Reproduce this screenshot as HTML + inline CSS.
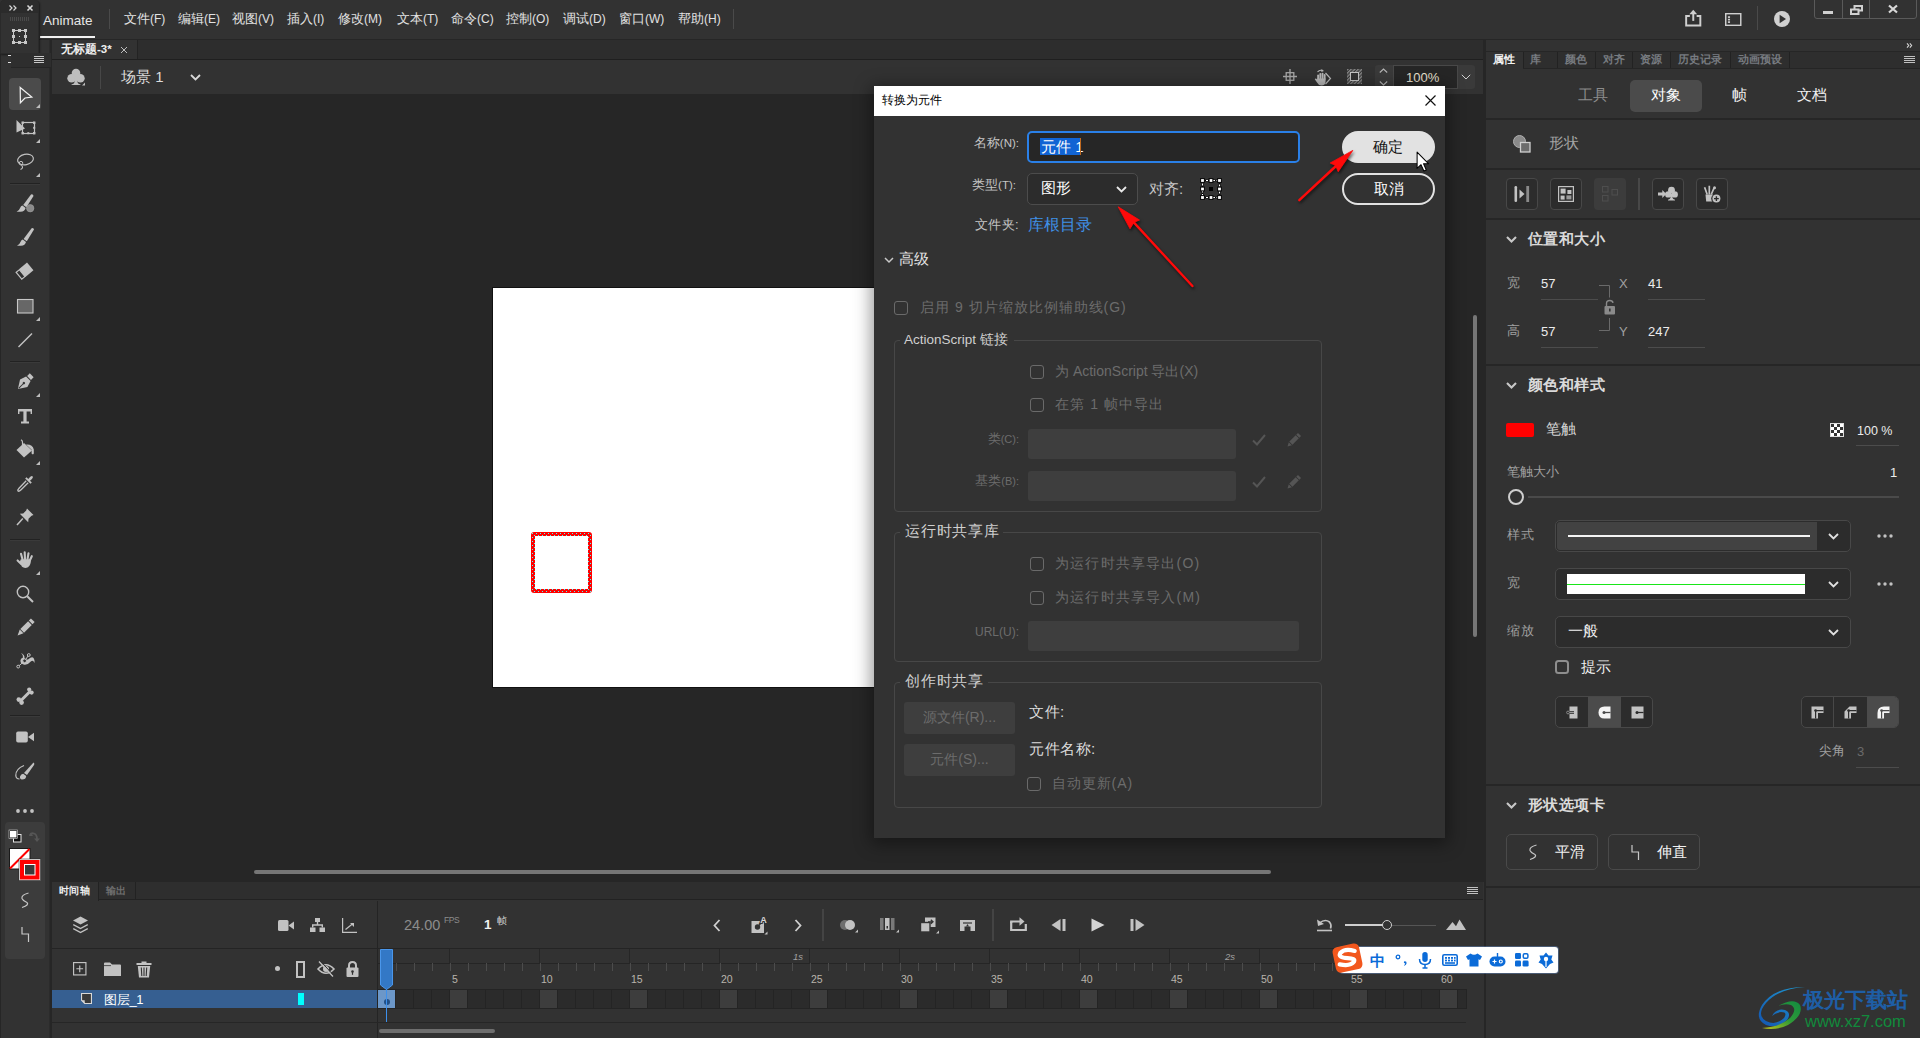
<!DOCTYPE html>
<html lang="zh">
<head>
<meta charset="utf-8">
<title>Animate</title>
<style>
*{box-sizing:border-box;margin:0;padding:0}
html,body{width:1920px;height:1038px;overflow:hidden;background:#262626}
body{font-family:"Liberation Sans",sans-serif;font-size:13px;color:#d6d6d6;position:relative}
.abs{position:absolute}
.t{position:absolute;white-space:nowrap;line-height:1}
svg{position:absolute;overflow:visible}
/* top menubar */
#menubar{left:0;top:0;width:1920px;height:40px;background:#323232}
#menubar .mi{top:12px;font-size:13px;color:#e2e2e2}
/* doc tabs */
#doctabs{left:52px;top:40px;width:1431px;height:20px;background:#2d2d2d;border-bottom:1px solid #1f1f1f}
#scenebar{left:52px;top:60px;width:1431px;height:34px;background:#323232}
/* toolbar */
#toolbar{left:0;top:40px;width:50px;height:998px;background:#323232}
/* stage */
#stagearea{left:50px;top:94px;width:1436px;height:788px;background:#262626}
/* right */
#right{left:1487px;top:40px;width:433px;height:998px;background:#323232}
/* timeline */
#timeline{left:52px;top:882px;width:1432px;height:156px;background:#323232}
</style>
</head>
<body>
<!--MENUBAR-->
<div id="menubar" class="abs">
<div class="abs" style="left:0;top:39px;width:1920px;height:1px;background:#262626"></div>
<div class="t" style="left:43px;top:14px;font-size:13.5px;color:#e6e6e6">Animate</div>
<div class="abs" style="left:40px;top:36px;width:55px;height:1.5px;background:#f0f0f0"></div>
<div class="abs" style="left:109px;top:9px;width:1px;height:20px;background:#4a4a4a"></div>
<div class="t mi" style="left:124px">文件<span style="font-size:12px">(F)</span></div>
<div class="t mi" style="left:178px">编辑<span style="font-size:12px">(E)</span></div>
<div class="t mi" style="left:232px">视图<span style="font-size:12px">(V)</span></div>
<div class="t mi" style="left:287px">插入<span style="font-size:12px">(I)</span></div>
<div class="t mi" style="left:338px">修改<span style="font-size:12px">(M)</span></div>
<div class="t mi" style="left:397px">文本<span style="font-size:12px">(T)</span></div>
<div class="t mi" style="left:451px">命令<span style="font-size:12px">(C)</span></div>
<div class="t mi" style="left:506px">控制<span style="font-size:12px">(O)</span></div>
<div class="t mi" style="left:563px">调试<span style="font-size:12px">(D)</span></div>
<div class="t mi" style="left:619px">窗口<span style="font-size:12px">(W)</span></div>
<div class="t mi" style="left:678px">帮助<span style="font-size:12px">(H)</span></div>
<div class="abs" style="left:733px;top:9px;width:1px;height:20px;background:#4a4a4a"></div>
<!-- share -->
<svg style="left:1685px;top:8px" width="16.500" height="19" viewBox="0 0 17 19"><path d="M5 8H1.2V17.8H15.8V8H12" fill="none" stroke="#cfcfcf" stroke-width="2"/><path d="M8.5 13V3" stroke="#cfcfcf" stroke-width="2"/><path d="M4.5 6.2L8.5 1.6L12.5 6.2Z" fill="#cfcfcf"/></svg>
<!-- workspace -->
<svg style="left:1725px;top:13px" width="16.500" height="13" viewBox="0 0 17 14" preserveAspectRatio="none"><rect x="0.75" y="0.75" width="15.5" height="12.5" fill="none" stroke="#cfcfcf" stroke-width="1.5"/><rect x="3" y="3.5" width="2.2" height="1.8" fill="#cfcfcf"/><rect x="3" y="6.2" width="2.2" height="1.8" fill="#cfcfcf"/><rect x="3" y="8.9" width="2.2" height="1.8" fill="#cfcfcf"/></svg>
<div class="abs" style="left:1757px;top:6px;width:1px;height:24px;background:#4a4a4a"></div>
<!-- play -->
<svg style="left:1774px;top:11px" width="16" height="16" viewBox="0 0 16 16"><circle cx="8" cy="8" r="8" fill="#d0d0d0"/><path d="M5.6 3.8L12 8L5.6 12.2Z" fill="#323232"/></svg>
<!-- window controls -->
<div class="abs" style="left:1814px;top:-3px;width:103px;height:22px;border:1px solid #5a5a5a;border-radius:3px"></div>
<div class="abs" style="left:1842px;top:0;width:1px;height:19px;background:#5a5a5a"></div>
<div class="abs" style="left:1869px;top:0;width:1px;height:19px;background:#5a5a5a"></div>
<div class="abs" style="left:1823px;top:11px;width:10px;height:3px;background:#d0d0d0"></div>
<svg style="left:1850px;top:5px" width="13" height="10" viewBox="0 0 13 10"><rect x="4.5" y="1" width="7.5" height="4.5" fill="none" stroke="#d0d0d0" stroke-width="2"/><rect x="1" y="4.5" width="7.5" height="4.5" fill="#323232" stroke="#d0d0d0" stroke-width="2"/></svg>
<svg style="left:1888px;top:5px" width="10" height="8" viewBox="0 0 10 8"><path d="M1 0.5L9 7.5M9 0.5L1 7.5" stroke="#d8d8d8" stroke-width="2.2"/></svg>
</div>
<!--TOOLBAR-->
<div id="toolbar" class="abs">
<div class="abs" style="left:0;top:0;width:1px;height:998px;background:#262626"></div>
<div class="abs" style="left:49px;top:0;width:1px;height:998px;background:#2b2b2b"></div>
<div class="abs" style="left:0;top:-40px;width:39px;height:54px;background:#323232;border:1px solid #2a2a2a;border-radius:4px 4px 0 0;box-shadow:1px 1px 2px rgba(0,0,0,.45)"></div>
<div class="abs" style="left:1px;top:-40px;width:37px;height:13px;background:#2b2b2b;border-radius:4px 4px 0 0"></div>
<svg style="left:8.500px;top:-35px" width="8" height="6" viewBox="0 0 8 6"><path d="M0.5 0.5L3 3L0.5 5.5M4.5 0.5L7 3L4.5 5.5" fill="none" stroke="#d8d8d8" stroke-width="1.2"/></svg>
<svg style="left:27px;top:-35px" width="6" height="6" viewBox="0 0 6 6"><path d="M0.5 0.5L5.5 5.5M5.5 0.5L0.5 5.5" stroke="#d8d8d8" stroke-width="1.6"/></svg>
<div class="abs" style="left:10px;top:-23px;width:19px;height:4px;background:repeating-linear-gradient(90deg,#4a4a4a 0 1px,transparent 1px 2px)"></div>
<svg style="left:12px;top:-11px" width="15" height="15" viewBox="0 0 15 15"><rect x="1.5" y="1.5" width="12" height="12" fill="none" stroke="#c8c8c8" stroke-width="1"/><g fill="#c8c8c8"><rect x="0" y="0" width="3" height="3"/><rect x="6" y="0" width="3" height="3"/><rect x="12" y="0" width="3" height="3"/><rect x="0" y="6" width="3" height="3"/><rect x="12" y="6" width="3" height="3"/><rect x="0" y="12" width="3" height="3"/><rect x="6" y="12" width="3" height="3"/><rect x="12" y="12" width="3" height="3"/><rect x="7" y="7" width="1" height="1"/></g></svg>
<div class="abs" style="left:11px;top:13px;width:40px;height:15px;background:#2e2e2e;border-bottom:1px solid #262626"></div>
<div class="abs" style="left:8px;top:15px;width:3px;height:1px;background:#e0e0e0"></div>
<div class="abs" style="left:8px;top:22px;width:3px;height:1px;background:#e0e0e0"></div>
<div class="abs" style="left:34px;top:16px;width:10px;height:7px;background:repeating-linear-gradient(180deg,#c8c8c8 0 1px,transparent 1px 2px)"></div>
<div class="abs" style="left:9px;top:38px;width:32px;height:32px;background:#4b4b4b;border-radius:4px"></div>
<svg style="left:13px;top:43px" width="24" height="24" viewBox="0 0 24 24"><path d="M7.200 4.400L18.800 14L12 15L7.400 19.800Z" fill="none" stroke="#f0f0f0" stroke-width="1.250" stroke-linejoin="miter"/></svg>
<svg style="left:35.500px;top:64px" width="4" height="4" viewBox="0 0 4 4"><path d="M4 0V4H0Z" fill="#bdbdbd"/></svg>
<svg style="left:13px;top:76px" width="24" height="24" viewBox="0 0 24 24"><path d="M3.500 4L12 12.500L3.500 16.500Z" fill="#c2c2c2"/><rect x="9.5" y="6.5" width="12" height="11" fill="none" stroke="#c2c2c2" stroke-width="1.2"/><g fill="#c2c2c2"><rect x="8.5" y="5.5" width="2.4" height="2.4"/><rect x="20" y="5.5" width="2.4" height="2.4"/><rect x="8.5" y="16" width="2.4" height="2.4"/><rect x="20" y="16" width="2.4" height="2.4"/><rect x="14.3" y="16.2" width="2" height="2"/><rect x="20.2" y="10.8" width="2" height="2"/></g></svg>
<svg style="left:35.500px;top:99px" width="4" height="4" viewBox="0 0 4 4"><path d="M4 0V4H0Z" fill="#bdbdbd"/></svg>
<svg style="left:13px;top:110px" width="24" height="24" viewBox="0 0 24 24"><ellipse cx="12.5" cy="9.5" rx="8" ry="5.2" transform="rotate(-12 12.5 9.5)" fill="none" stroke="#c2c2c2" stroke-width="1.2"/><circle cx="8" cy="13.2" r="1.8" fill="none" stroke="#c2c2c2" stroke-width="1"/><path d="M8.5 15Q11 18 7.5 19.5" fill="none" stroke="#c2c2c2" stroke-width="1.1"/></svg>
<svg style="left:35.500px;top:133px" width="4" height="4" viewBox="0 0 4 4"><path d="M4 0V4H0Z" fill="#bdbdbd"/></svg>
<div class="abs" style="left:10px;top:143px;width:30px;height:1px;background:#222;box-shadow:0 1px 0 #3a3a3a"></div>
<svg style="left:13px;top:152px" width="24" height="24" viewBox="0 0 24 24"><path d="M18 2.400Q20.200 1.800 20.500 3.900L13.400 15.200L10.200 13Z" fill="#c2c2c2"/><path d="M9.400 13.600L12.600 15.900Q11.800 19.500 7.600 19.800L3.600 19.800Q6.600 18 7.200 15.800Q7.800 14 9.400 13.600Z" fill="#c2c2c2"/><circle cx="17.200" cy="16.200" r="3.700" fill="#8a8a8a" stroke="#a0a0a0" stroke-width=".6"/></svg>
<svg style="left:13px;top:185px" width="24" height="24" viewBox="0 0 24 24"><path d="M18.600 3.200Q20.800 2.600 21 4.600L13.800 16.200L10.600 14Z" fill="#c2c2c2"/><path d="M9.800 14.600L13 16.900Q12.200 20.500 8 20.800L4 20.800Q7 19 7.600 16.800Q8.200 15 9.800 14.600Z" fill="#c2c2c2"/></svg>
<svg style="left:13px;top:219px" width="24" height="24" viewBox="0 0 24 24"><g transform="rotate(-40 12 12)"><rect x="8.500" y="6.800" width="10.500" height="10" fill="#c2c2c2"/><rect x="4.300" y="7.400" width="4.200" height="8.800" fill="none" stroke="#c2c2c2" stroke-width="1.200"/></g></svg>
<svg style="left:13px;top:254px" width="24" height="24" viewBox="0 0 24 24"><rect x="4.5" y="5.5" width="15.5" height="13.5" fill="#676767" stroke="#c8c8c8" stroke-width="1.1"/></svg>
<svg style="left:35.500px;top:277px" width="4" height="4" viewBox="0 0 4 4"><path d="M4 0V4H0Z" fill="#bdbdbd"/></svg>
<svg style="left:13px;top:288px" width="24" height="24" viewBox="0 0 24 24"><path d="M5.5 19L19 5.5" stroke="#c2c2c2" stroke-width="1.4"/></svg>
<div class="abs" style="left:10px;top:321px;width:30px;height:1px;background:#222;box-shadow:0 1px 0 #3a3a3a"></div>
<svg style="left:13px;top:330px" width="24" height="24" viewBox="0 0 24 24"><g transform="rotate(45 12 12)"><path d="M9.3 2.5h5.4v3.8h-5.4z" fill="#c2c2c2"/><path d="M8.8 7.3h6.4l2 6.5L12 22L6.8 13.8Z" fill="#c2c2c2"/><path d="M12 21V14.5" stroke="#323232" stroke-width="1"/><circle cx="12" cy="13.6" r="1.2" fill="#323232"/></g></svg>
<svg style="left:35.500px;top:353px" width="4" height="4" viewBox="0 0 4 4"><path d="M4 0V4H0Z" fill="#bdbdbd"/></svg>
<svg style="left:13px;top:364px" width="24" height="24" viewBox="0 0 24 24"><path d="M5 5H19V10H17.600V7.600H13.600V17.400H16V19.400H8V17.400H10.400V7.600H6.400V10H5Z" fill="#c2c2c2"/></svg>
<svg style="left:13px;top:398px" width="24" height="24" viewBox="0 0 24 24"><path d="M11 5L19 12.5L11 19.5L3.5 12Z" fill="#c2c2c2"/><path d="M9.5 7V4.2Q9.5 2.5 8 1.8" fill="none" stroke="#c2c2c2" stroke-width="1.2"/><path d="M13 6.5Q19.5 6 20.8 11.5V15.5Q19.8 17.2 18.6 15.5V11.8Z" fill="#c2c2c2"/></svg>
<svg style="left:35.500px;top:421px" width="4" height="4" viewBox="0 0 4 4"><path d="M4 0V4H0Z" fill="#bdbdbd"/></svg>
<svg style="left:13px;top:432px" width="24" height="24" viewBox="0 0 24 24"><path d="M13.2 8.8L6 16.2Q4.3 18 5 19Q6 19.8 7.8 18L15.2 10.8" fill="none" stroke="#c2c2c2" stroke-width="1.3"/><path d="M12.2 6.5L17.5 11.8L18.8 10.5L17 8.7Q21 5.6 19.5 4.3Q18.2 3 15.3 7L13.5 5.2Z" fill="#c2c2c2"/></svg>
<svg style="left:13px;top:465px" width="24" height="24" viewBox="0 0 24 24"><path d="M14 3.5L20.5 10L18.5 10.8L15.5 13.8L15.2 17.2L6.8 8.8L10.2 8.5L13.2 5.5Z" fill="#c2c2c2"/><path d="M9.8 13.5L4 20" stroke="#c2c2c2" stroke-width="1.5"/></svg>
<div class="abs" style="left:10px;top:499px;width:30px;height:1px;background:#222;box-shadow:0 1px 0 #3a3a3a"></div>
<svg style="left:13px;top:508px" width="24" height="24" viewBox="0 0 24 24"><g stroke="#c2c2c2" stroke-width="2.100" stroke-linecap="round" fill="none"><path d="M16.800 12.500L18.800 8.200M14.500 11.500L15.500 5.200M12 11.300L11.700 4.200M9.600 11.800L8 5.800M8 15.800L4.600 12.400"/></g><path d="M7.800 11.200H17.800Q18.300 16.500 15 19.300Q11.500 20.800 9 18.800L6.500 14.500Z" fill="#c2c2c2"/></svg>
<svg style="left:35.500px;top:531px" width="4" height="4" viewBox="0 0 4 4"><path d="M4 0V4H0Z" fill="#bdbdbd"/></svg>
<svg style="left:13px;top:542px" width="24" height="24" viewBox="0 0 24 24"><circle cx="10" cy="10" r="5.7" fill="none" stroke="#c2c2c2" stroke-width="1.4"/><path d="M14.2 14.2L20 20" stroke="#c2c2c2" stroke-width="2"/></svg>
<svg style="left:13px;top:576px" width="24" height="24" viewBox="0 0 24 24"><g transform="rotate(45 12 12)"><rect x="9.4" y="1" width="5.2" height="3" fill="#c2c2c2"/><rect x="9.4" y="5" width="5.2" height="11" fill="#c2c2c2"/><path d="M9.4 16.8h5.2L12 22.5Z" fill="#c2c2c2"/></g></svg>
<svg style="left:13px;top:609px" width="24" height="24" viewBox="0 0 24 24"><path d="M8 4Q12 5.5 11.5 9.5Q14 12 17 9Q20.5 6.5 21.5 11.5V14Q20 10.5 17.8 12.5Q14.5 16.5 10.5 15.5Q7 14.5 7.5 11Q8 9 10 8.5Q10.5 6 8 4Z" fill="#c2c2c2"/><circle cx="11.6" cy="11.8" r="1.9" fill="#323232" stroke="#c2c2c2" stroke-width="1"/><circle cx="15.8" cy="6" r="1.4" fill="#323232" stroke="#c2c2c2" stroke-width="1"/><circle cx="5.2" cy="17.6" r="1.4" fill="#323232" stroke="#c2c2c2" stroke-width="1"/><path d="M6.2 16.6L10.3 13M12.8 10.3L15 7" stroke="#c2c2c2" stroke-width="1"/></svg>
<svg style="left:13px;top:644px" width="24" height="24" viewBox="0 0 24 24"><path d="M7.5 17L17 7.5" stroke="#c2c2c2" stroke-width="3"/><circle cx="16.2" cy="5.6" r="2.1" fill="#c2c2c2"/><circle cx="18.6" cy="8.6" r="2.1" fill="#c2c2c2"/><circle cx="5.8" cy="15.6" r="2.3" fill="#c2c2c2"/><circle cx="8.6" cy="18.6" r="2.3" fill="#c2c2c2"/></svg>
<div class="abs" style="left:10px;top:675px;width:30px;height:1px;background:#222;box-shadow:0 1px 0 #3a3a3a"></div>
<svg style="left:13px;top:685px" width="24" height="24" viewBox="0 0 24 24"><rect x="3.2" y="6.5" width="11.6" height="11" rx="1.8" fill="#c2c2c2"/><path d="M15 12L21 7.8V16.2Z" fill="#c2c2c2"/></svg>
<svg style="left:13px;top:720px" width="24" height="24" viewBox="0 0 24 24"><path d="M20.5 2.5Q22 3.5 21 5L14 15L11 13Z" fill="#c2c2c2"/><path d="M10.2 13.8L13.2 16Q13 19.5 9 19.5Q6.5 19 7 16.5Q8 14 10.2 13.8Z" fill="#c2c2c2"/><path d="M11 5.5Q2.5 9 2.8 15.5Q3 19 6.5 19" fill="none" stroke="#c2c2c2" stroke-width="1.2"/></svg>
<svg style="left:16px;top:769px" width="18" height="4" viewBox="0 0 18 4"><circle cx="2" cy="2" r="1.9" fill="#c2c2c2"/><circle cx="9" cy="2" r="1.9" fill="#c2c2c2"/><circle cx="16" cy="2" r="1.9" fill="#c2c2c2"/></svg>
<div class="abs" style="left:5px;top:782px;width:40px;height:137px;background:#3c3c3c;border-radius:4px"></div>
<svg style="left:9px;top:790px" width="13" height="13" viewBox="0 0 13 13"><rect x="4.5" y="4.5" width="7.5" height="7.5" fill="#111" stroke="#e8e8e8" stroke-width="1"/><rect x="0.5" y="0.5" width="7.5" height="7.5" fill="#fff" stroke="#111" stroke-width="1"/><rect x="0" y="0" width="8.5" height="8.5" fill="none" stroke="#ddd" stroke-width=".6"/></svg>
<svg style="left:29px;top:791px" width="11" height="11" viewBox="0 0 11 11"><path d="M1 4.5Q1.5 1.5 5 2.5Q8 3.5 8 8" fill="none" stroke="#565656" stroke-width="1.8"/><path d="M5 7.5h6L8 11Z" fill="#565656"/><path d="M0 5L4 5L2 1.5Z" fill="#565656"/></svg>
<svg style="left:9px;top:808px" width="32" height="33" viewBox="0 0 32 33"><rect x="0.5" y="0.5" width="20.5" height="20.5" fill="#fff" stroke="#1a1a1a" stroke-width="1"/><path d="M1 20.5L20.5 1" stroke="#f00" stroke-width="2"/><rect x="10.5" y="11.5" width="20.5" height="20.5" fill="#f00" stroke="#fff" stroke-width="1"/><rect x="10" y="11" width="21.5" height="21.5" fill="none" stroke="#1a1a1a" stroke-width=".5"/><rect x="15.5" y="16.5" width="10.5" height="10.5" fill="#3a3a3a" stroke="#fff" stroke-width="1"/></svg>
<svg style="left:20px;top:852px" width="10" height="17" viewBox="0 0 10 17"><path d="M8.5 1Q1 3 2 6.5Q3 9 7 10.5Q9.5 13 2 15.5" fill="none" stroke="#c8c8c8" stroke-width="1.2"/></svg>
<svg style="left:21px;top:886px" width="9" height="17" viewBox="0 0 9 17"><path d="M1 1V8H7.5V16" fill="none" stroke="#c8c8c8" stroke-width="1.2"/></svg>
</div>
<!--DOCTABS-->
<div id="doctabs" class="abs">
<div class="abs" style="left:0;top:0;width:86px;height:19px;background:#323232;border-right:1px solid #232323"></div>
<div class="t" style="left:9px;top:4px;font-size:11.500px;font-weight:bold;color:#efefef">无标题-3*</div>
<svg style="left:68px;top:6px" width="8" height="8" viewBox="0 0 8 8"><path d="M1 1L7 7M7 1L1 7" stroke="#bdbdbd" stroke-width="1"/></svg>
</div>
<div id="scenebar" class="abs">
<svg style="left:15px;top:8px" width="19" height="18" viewBox="0 0 19 18"><circle cx="9" cy="5" r="4.3" fill="#bdbdbd"/><circle cx="4.6" cy="10.2" r="4.3" fill="#bdbdbd"/><circle cx="13.4" cy="10.2" r="4.3" fill="#bdbdbd"/><path d="M8 9H10L10.6 14.5Q11 16 13.5 16.6V17H4.5V16.6Q7 16 7.4 14.5Z" fill="#bdbdbd"/><path d="M18 14.5V17.5H15Z" fill="#bdbdbd"/></svg>
<div class="abs" style="left:48px;top:6px;width:1px;height:23px;background:#474747"></div>
<div class="t" style="left:69px;top:9px;font-size:15px;color:#dcdcdc">场景 1</div>
<svg style="left:138px;top:14px" width="11" height="7" viewBox="0 0 11 7"><path d="M1 1L5.5 5.5L10 1" fill="none" stroke="#d8d8d8" stroke-width="1.8"/></svg>
<!-- right controls -->
<svg style="left:1231px;top:9px" width="14" height="15" viewBox="0 0 14 15"><path d="M7 0V15M0 7.500H14" stroke="#a8a8a8" stroke-width="1.300"/><rect x="3.200" y="3.700" width="7.600" height="7.600" fill="none" stroke="#a8a8a8" stroke-width="1.300"/></svg>
<svg style="left:1262px;top:9px" width="18" height="17" viewBox="0 0 18 17"><g fill="#b8b8b8"><rect x="3.200" y="5.500" width="1.900" height="6" rx=".95"/><rect x="5.400" y="4" width="1.900" height="7" rx=".95"/><rect x="7.600" y="3.800" width="1.900" height="7" rx=".95"/><rect x="9.800" y="5" width="1.800" height="6" rx=".9"/><path d="M3.200 9.500H11.600V12Q11.600 16.500 7.400 16.500Q4.500 16.500 3 13.500L0.800 10.200Q1.500 8.800 3.200 10.500Z"/></g><path d="M11.500 4L16.500 9.500L11.500 15" fill="none" stroke="#b8b8b8" stroke-width="1.200"/><path d="M3.500 3Q5.500 0.500 8.500 1.500" fill="none" stroke="#b8b8b8" stroke-width="1.100"/><path d="M7.500 0L10 2L7.300 3Z" fill="#b8b8b8"/></svg>
<svg style="left:1295px;top:9px" width="15" height="15" viewBox="0 0 15 15"><defs><pattern id="hat" width="2.500" height="2.500" patternUnits="userSpaceOnUse" patternTransform="rotate(45)"><rect width="2.500" height="2.500" fill="#3a3a3a"/><rect width="1.300" height="2.500" fill="#8a8a8a"/></pattern></defs><rect x="0" y="0" width="15" height="15" fill="url(#hat)"/><rect x="3.500" y="3.500" width="8" height="8" fill="#323232" stroke="#c4c4c4" stroke-width="1"/></svg>
<div class="abs" style="left:1323px;top:5px;width:100px;height:24px;background:#3a3a3a;border-radius:3px"></div>
<svg style="left:1327px;top:8px" width="9" height="18" viewBox="0 0 9 18"><path d="M0.8 4.5L4.5 1L8.2 4.5M0.8 13.5L4.5 17L8.2 13.5" fill="none" stroke="#b5b5b5" stroke-width="1.1"/></svg>
<div class="abs" style="left:1341px;top:5px;width:65px;height:24px;background:#262626;border:1px solid #484848"></div>
<div class="t" style="left:1354px;top:11px;font-size:13px;color:#e8e0d0">100%</div>
<svg style="left:1409px;top:14px" width="10" height="6" viewBox="0 0 10 6"><path d="M0.8 0.8L5 5L9.2 0.8" fill="none" stroke="#d0d0d0" stroke-width="1"/></svg>
</div>
<!--STAGE-->
<div id="stagearea" class="abs">
<div class="abs" style="left:442px;top:193px;width:552px;height:401px;background:#fff;border:1px solid #111"></div>
<!-- red selected square -->
<svg style="left:481px;top:438px" width="61" height="61" viewBox="0 0 61 61"><defs><pattern id="sel" width="4" height="4" patternUnits="userSpaceOnUse"><rect width="4" height="4" fill="#ff0000"/><rect x="1" y="1" width="1" height="1" fill="#4ff"/><rect x="3" y="3" width="1" height="1" fill="#4ff"/></pattern></defs><rect x="2" y="2" width="57" height="57" rx="1.200" fill="none" stroke="url(#sel)" stroke-width="4"/></svg>
<!-- h scroll -->
<div class="abs" style="left:204px;top:776px;width:1017px;height:4px;border-radius:2px;background:#767676"></div>
<!-- v scroll -->
<div class="abs" style="left:1423px;top:221px;width:4px;height:322px;border-radius:2px;background:#767676"></div>
</div>
<!--TIMELINE-->
<div id="timeline" class="abs">
<div class="abs" style="left:0;top:0;width:1431px;height:18px;background:#2e2e2e;border-bottom:1px solid #222"></div>
<div class="abs" style="left:0;top:0;width:47px;height:19px;background:#323232;border-right:1px solid #222"></div>
<div class="abs" style="left:47px;top:0;width:37px;height:18px;border-right:1px solid #222"></div>
<div class="t" style="left:7px;top:3.500px;font-size:10px;font-weight:bold;letter-spacing:.3px;color:#f0f0f0">时间轴</div>
<div class="t" style="left:54px;top:3.500px;font-size:10px;font-weight:bold;letter-spacing:.3px;color:#6e6e6e">输出</div>
<div class="abs" style="left:1415px;top:5px;width:11px;height:7px;background:repeating-linear-gradient(180deg,#c0c0c0 0 1px,transparent 1px 2px)"></div>
<svg style="left:20px;top:34px" width="17" height="18" viewBox="0 0 17 18"><path d="M8.5 0.5L16 4.5L8.5 8.5L1 4.5Z" fill="#c2c2c2"/><path d="M1.5 8L8.5 11.7L15.5 8L16 9.2L8.5 13.2L1 9.2Z" fill="#c2c2c2"/><path d="M1.5 12L8.5 15.7L15.5 12L16 13.2L8.5 17.2L1 13.2Z" fill="#c2c2c2"/></svg>
<svg style="left:226px;top:38px" width="16" height="11" viewBox="0 0 16 11"><rect x="0" y="0" width="10.5" height="11" rx="1.5" fill="#c2c2c2"/><path d="M10.5 5.5L16 1.5V9.5Z" fill="#c2c2c2"/></svg>
<svg style="left:258px;top:36px" width="15" height="14" viewBox="0 0 15 14"><rect x="5" y="0" width="5" height="4" fill="#c2c2c2"/><rect x="0" y="9.5" width="5.5" height="4.5" fill="#c2c2c2"/><rect x="9.5" y="9.5" width="5.5" height="4.5" fill="#c2c2c2"/><path d="M7.5 4V7M2.7 9.5V7H12.3V9.5" fill="none" stroke="#c2c2c2" stroke-width="1.4"/></svg>
<svg style="left:290px;top:36px" width="15" height="15" viewBox="0 0 15 15"><path d="M0.6 0V14.4H15" fill="none" stroke="#c2c2c2" stroke-width="1.2"/><path d="M3.5 11.5L11 5.5" stroke="#c2c2c2" stroke-width="1.2"/><path d="M8 5H12V9Z" fill="#c2c2c2"/></svg>
<div class="t" style="left:352px;top:36px;font-size:14.5px;color:#8c8c8c">24.00</div>
<div class="t" style="left:392px;top:34px;font-size:8.500px;letter-spacing:-.4px;color:#8c8c8c">FPS</div>
<div class="t" style="left:432px;top:36px;font-size:13.5px;font-weight:bold;color:#f0f0f0">1</div>
<div class="t" style="left:445px;top:34px;font-size:10px;color:#cfcfcf">帧</div>
<svg style="left:661px;top:37px" width="8" height="13" viewBox="0 0 8 13"><path d="M6.5 1L1.5 6.5L6.5 12" fill="none" stroke="#d0d0d0" stroke-width="1.8"/></svg>
<svg style="left:699px;top:33px" width="18" height="20" viewBox="0 0 18 20"><rect x="0.500" y="6" width="12.500" height="12" fill="#c2c2c2"/><circle cx="6.500" cy="12" r="2.700" fill="#323232"/><path d="M6.500 12L10 8" stroke="#323232" stroke-width="1.200"/><text x="9.300" y="7.600" font-family="Liberation Sans" font-size="9" font-weight="bold" fill="#d8d8d8" stroke="#323232" stroke-width="2.200" paint-order="stroke">A</text><path d="M16.500 16.500V19.500H13.500Z" fill="#c2c2c2"/></svg>
<svg style="left:742px;top:37px" width="8" height="13" viewBox="0 0 8 13"><path d="M1.5 1L6.5 6.5L1.5 12" fill="none" stroke="#d0d0d0" stroke-width="1.8"/></svg>
<div class="abs" style="left:770px;top:27px;width:2px;height:32px;background:#444"></div>
<svg style="left:787px;top:37px" width="20" height="14" viewBox="0 0 20 14"><circle cx="6" cy="6" r="5" fill="#6e6e6e"/><circle cx="11" cy="6" r="5" fill="#c2c2c2"/><path d="M19 10.5V13.5H16Z" fill="#c2c2c2"/></svg>
<svg style="left:828px;top:36px" width="20" height="15" viewBox="0 0 20 15"><rect x="0" y="0" width="3.5" height="12" fill="#7a7a7a"/><rect x="5" y="0" width="4.5" height="12" fill="#c2c2c2"/><rect x="11" y="0" width="3.5" height="12" fill="#7a7a7a"/><rect x="6.5" y="8" width="1.5" height="2.5" fill="#323232"/><path d="M19 11.5V14.5H16Z" fill="#c2c2c2"/></svg>
<svg style="left:868px;top:35px" width="20" height="17" viewBox="0 0 20 17"><rect x="5" y="0.500" width="10.500" height="9.500" fill="#c2c2c2"/><rect x="0.500" y="5.500" width="9.500" height="9.500" fill="#c2c2c2" stroke="#323232" stroke-width="1.400"/><path d="M8 4.800H12.500M10.800 2.800L13 4.800L10.800 6.800" fill="none" stroke="#323232" stroke-width="1.300"/><path d="M19 13.500V16.500H16Z" fill="#c2c2c2"/></svg>
<svg style="left:908px;top:38px" width="15" height="11" viewBox="0 0 15 11"><path d="M0 0H15V11H10.500V6.500H4.500V11H0Z" fill="#c2c2c2"/><path d="M3 3H12" stroke="#323232" stroke-width="1.200"/><path d="M6 6.500L7.500 4L9 6.500Z" fill="#323232"/></svg>
<div class="abs" style="left:940px;top:27px;width:2px;height:32px;background:#444"></div>
<svg style="left:958px;top:35px" width="18" height="14" viewBox="0 0 18 14"><path d="M1.200 5V13H15.800V7" fill="none" stroke="#c2c2c2" stroke-width="2.200"/><path d="M1.200 6V4.500H10" fill="none" stroke="#c2c2c2" stroke-width="2.200"/><path d="M9.500 0.300L14.500 4.500L9.500 8.700Z" fill="#c2c2c2"/></svg>
<svg style="left:999px;top:37px" width="15" height="12" viewBox="0 0 15 12"><path d="M9.5 0V12L0.5 6Z" fill="#c2c2c2"/><rect x="11.5" y="0" width="3" height="12" fill="#c2c2c2"/></svg>
<svg style="left:1039px;top:36px" width="14" height="14" viewBox="0 0 14 14"><path d="M0.5 0.5L13.5 7L0.5 13.5Z" fill="#d4d4d4"/></svg>
<svg style="left:1078px;top:37px" width="15" height="12" viewBox="0 0 15 12"><path d="M5.5 0V12L14.5 6Z" fill="#c2c2c2"/><rect x="0.5" y="0" width="3" height="12" fill="#c2c2c2"/></svg>
<svg style="left:1264px;top:36px" width="17" height="14" viewBox="0 0 17 14"><path d="M3.5 5Q9 0.5 13.5 4Q16 7 14.5 10.5" fill="none" stroke="#c2c2c2" stroke-width="1.6"/><path d="M1 1.5L2 8L8 6Z" fill="#c2c2c2"/><path d="M1 12.5H16" stroke="#c2c2c2" stroke-width="1.6"/></svg>
<div class="abs" style="left:1293px;top:42px;width:38px;height:2px;background:#cfcfcf"></div>
<div class="abs" style="left:1340px;top:42.5px;width:44px;height:1px;background:#555"></div>
<div class="abs" style="left:1330px;top:38px;width:10px;height:10px;border:1.6px solid #cfcfcf;border-radius:50%"></div>
<svg style="left:1394px;top:37px" width="20" height="11" viewBox="0 0 20 11"><path d="M0 11L6.5 3L10 7.3L13.5 0.5L20 11Z" fill="#c2c2c2"/></svg>
<div class="abs" style="left:0;top:66px;width:1432px;height:1px;background:#242424"></div>
<div class="abs" style="left:325px;top:19px;width:1px;height:137px;background:#242424"></div>
<svg style="left:21px;top:80px" width="13.500" height="13.500" viewBox="0 0 14 14"><rect x="0.6" y="0.6" width="12.8" height="12.8" fill="none" stroke="#c2c2c2" stroke-width="1.2"/><path d="M7 3.5V10.5M3.5 7H10.5" stroke="#c2c2c2" stroke-width="1.2"/></svg>
<svg style="left:52px;top:80px" width="17" height="14" viewBox="0 0 17 14"><path d="M0 1.5Q0 0.5 1 0.5H6L8 2.5H16Q17 2.5 17 3.5V14H0Z" fill="#c2c2c2"/><path d="M0 3.6H7" stroke="#323232" stroke-width=".8"/></svg>
<svg style="left:84px;top:79px" width="16" height="17" viewBox="0 0 16 17"><path d="M5.5 0.5H10.5V2H15.5V4H0.5V2H5.5Z" fill="#c2c2c2"/><path d="M1.8 5H14.2L13 16.5H3Z" fill="#c2c2c2"/><path d="M5.3 6.5L5.8 15M8 6.5V15M10.7 6.5L10.2 15" stroke="#323232" stroke-width="1.1"/></svg>
<div class="abs" style="left:223px;top:84px;width:5px;height:5px;border-radius:50%;background:#c2c2c2"></div>
<div class="abs" style="left:244px;top:79px;width:9px;height:17px;border:2px solid #c2c2c2"></div>
<svg style="left:265px;top:78px" width="18" height="18" viewBox="0 0 18 18"><path d="M1 9Q9 0.5 17 9Q9 17.5 1 9Z" fill="none" stroke="#c2c2c2" stroke-width="1.6"/><circle cx="9" cy="9" r="3" fill="#c2c2c2"/><path d="M2 1.5L16 16.5" stroke="#c2c2c2" stroke-width="1.4"/><path d="M3.2 0.8L17 15.6" stroke="#323232" stroke-width="1"/></svg>
<svg style="left:294px;top:79px" width="13" height="16" viewBox="0 0 13 16"><path d="M3 7V4.5Q3 1 6.5 1Q10 1 10 4.5V7" fill="none" stroke="#c2c2c2" stroke-width="2"/><rect x="0.5" y="6.5" width="12" height="9.5" rx="1" fill="#c2c2c2"/><circle cx="6.5" cy="10.5" r="1.3" fill="#323232"/><rect x="5.9" y="11" width="1.2" height="2.8" fill="#323232"/></svg>
<div class="abs" style="left:0;top:108px;width:325px;height:18px;background:#365f91"></div>
<svg style="left:29px;top:111px" width="11" height="11" viewBox="0 0 12 12"><path d="M0.6 0.6H11.4V11.4H4L0.6 8Z" fill="#3a3a3a" stroke="#d8d8d8" stroke-width="1.2"/><path d="M0.6 8H4V11.4Z" fill="#d8d8d8"/></svg>
<div class="t" style="left:52px;top:111px;font-size:13px;color:#fff;letter-spacing:-.3px">图层_1</div>
<div class="abs" style="left:246px;top:111px;width:6px;height:12px;background:#00ffff"></div>
<div class="abs" style="left:326px;top:81px;width:1089px;height:1px;background:#252525"></div>
<div class="abs" style="left:343.500px;top:81px;width:1071px;height:8px;background:repeating-linear-gradient(90deg,#4c4c4c 0 1px,transparent 1px 18px)"></div>
<div class="abs" style="left:396.5px;top:67px;width:1px;height:14px;background:#262626"></div>
<div class="t" style="left:400px;top:92px;font-size:10.5px;color:#b8b4ac">5</div>
<div class="abs" style="left:486.5px;top:67px;width:1px;height:14px;background:#262626"></div>
<div class="t" style="left:489px;top:92px;font-size:10.5px;color:#b8b4ac">10</div>
<div class="abs" style="left:576.5px;top:67px;width:1px;height:14px;background:#262626"></div>
<div class="t" style="left:579px;top:92px;font-size:10.5px;color:#b8b4ac">15</div>
<div class="abs" style="left:666.5px;top:67px;width:1px;height:14px;background:#262626"></div>
<div class="t" style="left:669px;top:92px;font-size:10.5px;color:#b8b4ac">20</div>
<div class="abs" style="left:756.5px;top:67px;width:1px;height:14px;background:#262626"></div>
<div class="t" style="left:759px;top:92px;font-size:10.5px;color:#b8b4ac">25</div>
<div class="abs" style="left:846.5px;top:67px;width:1px;height:14px;background:#262626"></div>
<div class="t" style="left:849px;top:92px;font-size:10.5px;color:#b8b4ac">30</div>
<div class="abs" style="left:936.5px;top:67px;width:1px;height:14px;background:#262626"></div>
<div class="t" style="left:939px;top:92px;font-size:10.5px;color:#b8b4ac">35</div>
<div class="abs" style="left:1026.5px;top:67px;width:1px;height:14px;background:#262626"></div>
<div class="t" style="left:1029px;top:92px;font-size:10.5px;color:#b8b4ac">40</div>
<div class="abs" style="left:1116.5px;top:67px;width:1px;height:14px;background:#262626"></div>
<div class="t" style="left:1119px;top:92px;font-size:10.5px;color:#b8b4ac">45</div>
<div class="abs" style="left:1206.5px;top:67px;width:1px;height:14px;background:#262626"></div>
<div class="t" style="left:1209px;top:92px;font-size:10.5px;color:#b8b4ac">50</div>
<div class="abs" style="left:1296.5px;top:67px;width:1px;height:14px;background:#262626"></div>
<div class="t" style="left:1299px;top:92px;font-size:10.5px;color:#b8b4ac">55</div>
<div class="abs" style="left:1386.5px;top:67px;width:1px;height:14px;background:#262626"></div>
<div class="t" style="left:1389px;top:92px;font-size:10.5px;color:#b8b4ac">60</div>
<div class="t" style="left:741px;top:70px;font-size:9.5px;font-style:italic;color:#a0a0a0">1s</div>
<div class="t" style="left:1173px;top:70px;font-size:9.5px;font-style:italic;color:#a0a0a0">2s</div>
<div class="abs" style="left:326px;top:107px;width:1089px;height:20px;background:#242424"></div>
<div class="abs" style="left:326px;top:108px;width:1088px;height:18px;background:repeating-linear-gradient(90deg,#2b2b2b 0 17px,#242424 17px 18px)"></div>
<div class="abs" style="left:398px;top:108px;width:17px;height:18px;background:#3d3d3d"></div>
<div class="abs" style="left:488px;top:108px;width:17px;height:18px;background:#3d3d3d"></div>
<div class="abs" style="left:578px;top:108px;width:17px;height:18px;background:#3d3d3d"></div>
<div class="abs" style="left:668px;top:108px;width:17px;height:18px;background:#3d3d3d"></div>
<div class="abs" style="left:758px;top:108px;width:17px;height:18px;background:#3d3d3d"></div>
<div class="abs" style="left:848px;top:108px;width:17px;height:18px;background:#3d3d3d"></div>
<div class="abs" style="left:938px;top:108px;width:17px;height:18px;background:#3d3d3d"></div>
<div class="abs" style="left:1028px;top:108px;width:17px;height:18px;background:#3d3d3d"></div>
<div class="abs" style="left:1118px;top:108px;width:17px;height:18px;background:#3d3d3d"></div>
<div class="abs" style="left:1208px;top:108px;width:17px;height:18px;background:#3d3d3d"></div>
<div class="abs" style="left:1298px;top:108px;width:17px;height:18px;background:#3d3d3d"></div>
<div class="abs" style="left:1388px;top:108px;width:17px;height:18px;background:#3d3d3d"></div>
<div class="abs" style="left:326px;top:108px;width:17px;height:18px;background:#6c97c8"></div>
<div class="abs" style="left:331.500px;top:116.500px;width:6px;height:6px;border-radius:50%;background:#214f86"></div>
<svg style="left:328px;top:67px" width="13" height="41" viewBox="0 0 13 41"><path d="M0.5 0.5H12.5V36L6.5 40.5L0.5 36Z" fill="#3378c6" stroke="#4a96ea" stroke-width="1"/></svg>
<div class="abs" style="left:334px;top:107px;width:1.4px;height:33px;background:#3d90ec"></div>
<div class="abs" style="left:0;top:140px;width:1414px;height:1px;background:#262626"></div>
<div class="abs" style="left:327px;top:147px;width:116px;height:4px;border-radius:2px;background:#6e6e6e"></div>
</div>
<!--RIGHT-->
<div id="right" class="abs">
<div class="abs" style="left:-1px;top:0;width:1px;height:998px;background:#323232"></div>
<div class="abs" style="left:-1px;top:11px;width:434px;height:1px;background:#262626"></div>
<svg style="left:419px;top:3px" width="7" height="5" viewBox="0 0 8 7"><path d="M0.5 0.5L3 3.5L0.5 6.5M4.5 0.5L7 3.5L4.5 6.5" fill="none" stroke="#d8d8d8" stroke-width="1.500"/></svg>
<div class="abs" style="left:0;top:12px;width:433px;height:17px;background:#2e2e2e;border-bottom:1px solid #252525"></div>
<div class="abs" style="left:0;top:12px;width:36px;height:17px;background:#323232"></div>
<div class="abs" style="left:36px;top:12px;width:1px;height:16px;background:#222"></div>
<div class="abs" style="left:70px;top:12px;width:1px;height:16px;background:#222"></div>
<div class="abs" style="left:108px;top:12px;width:1px;height:16px;background:#222"></div>
<div class="abs" style="left:145px;top:12px;width:1px;height:16px;background:#222"></div>
<div class="abs" style="left:183px;top:12px;width:1px;height:16px;background:#222"></div>
<div class="abs" style="left:243px;top:12px;width:1px;height:16px;background:#222"></div>
<div class="abs" style="left:302px;top:12px;width:1px;height:16px;background:#222"></div>
<div class="t" style="left:6px;top:13.8px;font-size:10.5px;color:#f2f2f2;font-weight:bold;">属性</div>
<div class="t" style="left:43px;top:13.8px;font-size:10.5px;color:#777b80;font-weight:bold;">库</div>
<div class="t" style="left:78px;top:13.8px;font-size:10.5px;color:#777b80;font-weight:bold;">颜色</div>
<div class="t" style="left:116px;top:13.8px;font-size:10.5px;color:#777b80;font-weight:bold;">对齐</div>
<div class="t" style="left:153px;top:13.8px;font-size:10.5px;color:#777b80;font-weight:bold;">资源</div>
<div class="t" style="left:191px;top:13.8px;font-size:10.5px;color:#777b80;font-weight:bold;">历史记录</div>
<div class="t" style="left:251px;top:13.8px;font-size:10.5px;color:#777b80;font-weight:bold;">动画预设</div>
<div class="abs" style="left:417px;top:16px;width:11px;height:7px;background:repeating-linear-gradient(180deg,#c0c0c0 0 1px,transparent 1px 2px)"></div>
<div class="abs" style="left:143px;top:40px;width:72px;height:32px;background:#4b4b4b;border-radius:5px"></div>
<div class="t" style="left:91px;top:46.5px;font-size:15px;color:#8c8c8c;">工具</div>
<div class="t" style="left:164px;top:46.5px;font-size:15px;color:#ffffff;">对象</div>
<div class="t" style="left:245px;top:46.5px;font-size:15px;color:#f0f0f0;">帧</div>
<div class="t" style="left:310px;top:46.5px;font-size:15px;color:#f0f0f0;">文档</div>
<div class="abs" style="left:-1px;top:78px;width:434px;height:2px;background:#262626"></div>
<svg style="left:26px;top:95px" width="18" height="18" viewBox="0 0 18 18"><circle cx="6.5" cy="6.5" r="6" fill="#8a8a8a" stroke="#b0b0b0" stroke-width="1"/><rect x="7.500" y="7.500" width="9.500" height="9.500" fill="#6c6c6c" stroke="#d0d0d0" stroke-width="1.300"/></svg>
<div class="t" style="left:62px;top:94.5px;font-size:15px;color:#a2a2a2;">形状</div>
<div class="abs" style="left:-1px;top:128px;width:434px;height:2px;background:#262626"></div>
<div class="abs" style="left:19px;top:138px;width:32px;height:32px;background:#2c2c2c;border:1px solid #484848;border-radius:4px"></div>
<div class="abs" style="left:63px;top:138px;width:32px;height:32px;background:#2c2c2c;border:1px solid #484848;border-radius:4px"></div>
<div class="abs" style="left:107px;top:138px;width:32px;height:32px;background:#3c3c3c;border-radius:4px"></div>
<div class="abs" style="left:165px;top:138px;width:32px;height:32px;background:#2c2c2c;border:1px solid #484848;border-radius:4px"></div>
<div class="abs" style="left:209px;top:138px;width:32px;height:32px;background:#2c2c2c;border:1px solid #484848;border-radius:4px"></div>
<div class="abs" style="left:151px;top:138px;width:2px;height:32px;background:#484848"></div>
<svg style="left:27px;top:146px" width="16" height="16" viewBox="0 0 16 16"><rect x="0.5" y="0" width="2.6" height="16" rx="1.2" fill="#c2c2c2"/><path d="M5.5 3.5L10.5 8L5.5 12.5Z" fill="#c2c2c2"/><rect x="12.3" y="0" width="2.8" height="16" fill="#8a8a8a"/></svg>
<svg style="left:71px;top:146px" width="16" height="16" viewBox="0 0 16 16"><rect x="0.6" y="0.6" width="14.8" height="14.8" fill="none" stroke="#c2c2c2" stroke-width="1.2"/><rect x="2.6" y="2.6" width="5" height="5" fill="#c2c2c2"/><rect x="9.4" y="4" width="4" height="4" fill="#c2c2c2"/><rect x="2.6" y="9.6" width="4" height="4" fill="#c2c2c2"/><rect x="8.4" y="9.4" width="5" height="4" fill="#9a9a9a"/></svg>
<svg style="left:115px;top:146px" width="17" height="16" viewBox="0 0 17 16"><g fill="none" stroke="#4e4e4e" stroke-width="1"><rect x="0.5" y="0.5" width="5.5" height="5.5"/><rect x="0.5" y="9.5" width="5.5" height="5.5"/><rect x="10" y="3.5" width="5.5" height="5.5"/></g></svg>
<svg style="left:171px;top:146px" width="20" height="16" viewBox="0 0 20 16"><path d="M0 6.600H4.300V4L8.300 8L4.300 12V9.400H0Z" fill="#c2c2c2"/><circle cx="13.5" cy="4.2" r="3.4" fill="#c2c2c2"/><circle cx="10.3" cy="8.4" r="3.2" fill="#c2c2c2"/><circle cx="16.7" cy="8.4" r="3.2" fill="#c2c2c2"/><path d="M12.8 8H14.2L14.6 12Q15 13.3 17 13.8V14.5H10V13.8Q12 13.3 12.4 12Z" fill="#c2c2c2"/></svg>
<svg style="left:216px;top:145px" width="19" height="19" viewBox="0 0 19 19"><path d="M2.5 9.5H10L9.5 16.5H3.2Z" fill="#c2c2c2"/><path d="M4.2 9.5L1.6 2.2M6.3 9.5V0.8M8.2 9.5L11 3.2" stroke="#c2c2c2" stroke-width="1.7"/><circle cx="11.5" cy="2.8" r="1.5" fill="#c2c2c2"/><circle cx="13.400" cy="13.600" r="5.200" fill="#2c2c2c"/><circle cx="13.400" cy="13.600" r="4" fill="#c2c2c2"/><path d="M13.400 11.200V16M11 13.600H15.800" stroke="#2c2c2c" stroke-width="1.400"/></svg>
<div class="abs" style="left:-1px;top:178px;width:434px;height:2px;background:#262626"></div>
<svg style="left:19px;top:196px" width="11" height="7" viewBox="0 0 11 7"><path d="M1 1L5.5 5.5L10 1" fill="none" stroke="#c8c8c8" stroke-width="2.1"/></svg>
<div class="t" style="left:41px;top:190.5px;font-size:15px;color:#dadada;font-weight:bold;letter-spacing:.4px">位置和大小</div>
<div class="t" style="left:20px;top:235.5px;font-size:13px;color:#a0a0a0;">宽</div>
<div class="t" style="left:54px;top:236.5px;font-size:13px;color:#ececec;">57</div>
<div class="abs" style="left:54px;top:259px;width:57px;height:1px;background:#4c4c4c"></div>
<div class="t" style="left:132px;top:236.5px;font-size:13px;color:#a0a0a0;">X</div>
<div class="t" style="left:161px;top:236.5px;font-size:13px;color:#ececec;">41</div>
<div class="abs" style="left:161px;top:259px;width:57px;height:1px;background:#4c4c4c"></div>
<div class="t" style="left:20px;top:283.5px;font-size:13px;color:#a0a0a0;">高</div>
<div class="t" style="left:54px;top:284.5px;font-size:13px;color:#ececec;">57</div>
<div class="abs" style="left:54px;top:307px;width:57px;height:1px;background:#4c4c4c"></div>
<div class="t" style="left:132px;top:284.5px;font-size:13px;color:#a0a0a0;">Y</div>
<div class="t" style="left:161px;top:284.5px;font-size:13px;color:#ececec;">247</div>
<div class="abs" style="left:161px;top:307px;width:57px;height:1px;background:#4c4c4c"></div>
<svg style="left:112px;top:245px" width="17" height="46" viewBox="0 0 17 46"><path d="M0 0.5H10.5V12.5M10.5 33V45.5H0" fill="none" stroke="#6a6a6a" stroke-width="1"/><rect x="5.5" y="21" width="10.5" height="8.5" rx="1" fill="#8a8a8a"/><path d="M7.5 21V18.5Q7.5 15.5 10.8 15.5Q13.6 15.5 14 17.8" fill="none" stroke="#8a8a8a" stroke-width="1.4"/><rect x="10" y="23.5" width="1.6" height="3" fill="#323232"/></svg>
<div class="abs" style="left:-1px;top:324px;width:434px;height:2px;background:#262626"></div>
<svg style="left:19px;top:342px" width="11" height="7" viewBox="0 0 11 7"><path d="M1 1L5.5 5.5L10 1" fill="none" stroke="#c8c8c8" stroke-width="2.1"/></svg>
<div class="t" style="left:41px;top:336.5px;font-size:15px;color:#dadada;font-weight:bold;letter-spacing:.4px">颜色和样式</div>
<div class="abs" style="left:19px;top:383px;width:28px;height:14px;background:#ff0000;border-radius:2px"></div>
<div class="t" style="left:59px;top:381.0px;font-size:15px;color:#d4d4d4;">笔触</div>
<svg style="left:343px;top:383px" width="14" height="14" viewBox="0 0 14 14"><rect x="0.5" y="0.5" width="13" height="13" fill="#fff" stroke="#ddd" stroke-width="1"/><g fill="#333"><rect x="1" y="1" width="3" height="3"/><rect x="7" y="1" width="3" height="3"/><rect x="4" y="4" width="3" height="3"/><rect x="10" y="4" width="3" height="3"/><rect x="1" y="7" width="3" height="3"/><rect x="7" y="7" width="3" height="3"/><rect x="4" y="10" width="3" height="3"/><rect x="10" y="10" width="3" height="3"/></g></svg>
<div class="t" style="left:370px;top:384.8px;font-size:12.5px;color:#ececec;">100 %</div>
<div class="abs" style="left:369px;top:405px;width:43px;height:1px;background:#4c4c4c"></div>
<div class="t" style="left:20px;top:424.5px;font-size:13px;color:#a0a0a0;">笔触大小</div>
<div class="t" style="left:403px;top:426.0px;font-size:13px;color:#ececec;">1</div>
<div class="abs" style="left:41px;top:455.5px;width:371px;height:2px;background:#4a4a4a"></div>
<div class="abs" style="left:21px;top:448.5px;width:16px;height:16px;border:2.400px solid #cfcfcf;border-radius:50%"></div>
<div class="t" style="left:20px;top:487.5px;font-size:13px;color:#a0a0a0;letter-spacing:1px;">样式</div>
<div class="abs" style="left:68px;top:480px;width:296px;height:32px;background:#2c2c2c;border:1px solid #484848;border-radius:5px"></div>
<svg style="left:341px;top:493px" width="11" height="7" viewBox="0 0 11 7"><path d="M1 1L5.5 5.5L10 1" fill="none" stroke="#e0e0e0" stroke-width="1.8"/></svg>
<div class="abs" style="left:70px;top:482px;width:260px;height:28px;background:#424242;border-radius:3px 0 0 3px"></div>
<div class="abs" style="left:81px;top:494.5px;width:242px;height:2px;background:#f4f4f4"></div>
<svg style="left:390px;top:494px" width="16" height="4" viewBox="0 0 16 4"><circle cx="2" cy="2" r="1.7" fill="#c2c2c2"/><circle cx="8" cy="2" r="1.7" fill="#c2c2c2"/><circle cx="14" cy="2" r="1.7" fill="#c2c2c2"/></svg>
<div class="t" style="left:20px;top:535.5px;font-size:13px;color:#a0a0a0;">宽</div>
<div class="abs" style="left:68px;top:528px;width:296px;height:32px;background:#2c2c2c;border:1px solid #484848;border-radius:5px"></div>
<svg style="left:341px;top:541px" width="11" height="7" viewBox="0 0 11 7"><path d="M1 1L5.5 5.5L10 1" fill="none" stroke="#e0e0e0" stroke-width="1.8"/></svg>
<div class="abs" style="left:80px;top:534px;width:238px;height:20px;background:#fff"></div>
<div class="abs" style="left:80px;top:543.7px;width:238px;height:1px;background:#19e619"></div>
<svg style="left:390px;top:542px" width="16" height="4" viewBox="0 0 16 4"><circle cx="2" cy="2" r="1.7" fill="#c2c2c2"/><circle cx="8" cy="2" r="1.7" fill="#c2c2c2"/><circle cx="14" cy="2" r="1.7" fill="#c2c2c2"/></svg>
<div class="t" style="left:20px;top:583.5px;font-size:13px;color:#a0a0a0;letter-spacing:1px;">缩放</div>
<div class="abs" style="left:68px;top:576px;width:296px;height:32px;background:#2c2c2c;border:1px solid #484848;border-radius:5px"></div>
<svg style="left:341px;top:589px" width="11" height="7" viewBox="0 0 11 7"><path d="M1 1L5.5 5.5L10 1" fill="none" stroke="#e0e0e0" stroke-width="1.8"/></svg>
<div class="t" style="left:81px;top:583.0px;font-size:15px;color:#f0f0f0;">一般</div>
<div class="abs" style="left:68px;top:620px;width:14px;height:14px;border:2px solid #8e8e8e;border-radius:3.500px"></div>
<div class="t" style="left:94px;top:619.0px;font-size:15px;color:#f0f0f0;">提示</div>
<div class="abs" style="left:68px;top:656px;width:98px;height:32px;background:#2c2c2c;border:1px solid #484848;border-radius:5px;overflow:hidden"><div class="abs" style="left:32px;top:-1px;width:33px;height:32px;background:#4b4b4b"></div></div>
<div class="abs" style="left:314px;top:656px;width:98px;height:32px;background:#2c2c2c;border:1px solid #484848;border-radius:5px;overflow:hidden"><div class="abs" style="left:65px;top:-1px;width:34px;height:32px;background:#4b4b4b"></div></div>
<div class="abs" style="left:346px;top:657px;width:1px;height:30px;background:#484848"></div>
<svg style="left:79px;top:666px" width="12" height="13" viewBox="0 0 12 13"><rect x="3.500" y="0.500" width="8" height="12" fill="#c2c2c2"/><path d="M0 6.500H8" stroke="#2c2c2c" stroke-width="2.600"/><path d="M2 6.500H8" stroke="#9a9a9a" stroke-width="1"/><circle cx="2" cy="6.500" r="1.400" fill="#2c2c2c" stroke="#9a9a9a" stroke-width=".8"/></svg>
<svg style="left:111px;top:666px" width="13" height="13" viewBox="0 0 13 13"><path d="M12.500 0.500H6.500Q0.500 0.500 0.500 6.500Q0.500 12.500 6.500 12.500H12.500Z" fill="#f4f4f4"/><path d="M6 6.500H12.500" stroke="#4b4b4b" stroke-width="1.300"/><circle cx="6" cy="6.500" r="1.500" fill="#4b4b4b"/></svg>
<svg style="left:144px;top:666px" width="13" height="13" viewBox="0 0 13 13"><rect x="0.500" y="0.500" width="12" height="12" fill="#c2c2c2"/><path d="M6 6.500H12.500" stroke="#2c2c2c" stroke-width="1.300"/><circle cx="6" cy="6.500" r="1.500" fill="#2c2c2c"/></svg>
<svg style="left:324px;top:666px" width="13" height="13" viewBox="0 0 13 13"><path d="M0.500 0.500H12.500V7H7V12.500H0.500Z" fill="#c2c2c2"/><path d="M4.600 12.500V4.600H12.500" fill="none" stroke="#2c2c2c" stroke-width="1.200"/><circle cx="4.600" cy="4.600" r="1.400" fill="#2c2c2c"/></svg>
<svg style="left:357px;top:666px" width="13" height="13" viewBox="0 0 13 13"><path d="M0.500 5.500L5.500 0.500H12.500V7H7V12.500H0.500Z" fill="#c2c2c2"/><path d="M4.600 12.500V4.600H12.500" fill="none" stroke="#2c2c2c" stroke-width="1.200"/><circle cx="4.600" cy="4.600" r="1.400" fill="#2c2c2c"/></svg>
<svg style="left:390px;top:666px" width="13" height="13" viewBox="0 0 13 13"><path d="M0.500 7Q0.500 0.500 7 0.500H12.500V7H7V12.500H0.500Z" fill="#f4f4f4"/><path d="M4.600 12.500V4.600H12.500" fill="none" stroke="#4b4b4b" stroke-width="1.200"/><circle cx="4.600" cy="4.600" r="1.400" fill="#4b4b4b"/></svg>
<div class="t" style="left:332px;top:703.5px;font-size:13px;color:#a0a0a0;">尖角</div>
<div class="t" style="left:370px;top:704.5px;font-size:13px;color:#6a6a6a;">3</div>
<div class="abs" style="left:369px;top:727px;width:43px;height:1px;background:#4c4c4c"></div>
<div class="abs" style="left:-1px;top:744px;width:434px;height:2px;background:#262626"></div>
<svg style="left:19px;top:762px" width="11" height="7" viewBox="0 0 11 7"><path d="M1 1L5.5 5.5L10 1" fill="none" stroke="#c8c8c8" stroke-width="2.1"/></svg>
<div class="t" style="left:41px;top:756.5px;font-size:15px;color:#dadada;font-weight:bold;letter-spacing:.4px">形状选项卡</div>
<div class="abs" style="left:19px;top:794px;width:92px;height:36px;background:#323232;border:1px solid #4a4a4a;border-radius:5px"></div>
<div class="abs" style="left:121px;top:794px;width:92px;height:36px;background:#323232;border:1px solid #4a4a4a;border-radius:5px"></div>
<svg style="left:41px;top:804px" width="10" height="17" viewBox="0 0 10 17"><path d="M8.5 1Q1 3 2 6.5Q3 9 7 10.5Q9.5 13 2 15.5" fill="none" stroke="#c8c8c8" stroke-width="1.2"/></svg>
<div class="t" style="left:68px;top:803.5px;font-size:15px;color:#f0f0f0;">平滑</div>
<svg style="left:144px;top:804px" width="9" height="17" viewBox="0 0 9 17"><path d="M1 1V8H7.5V16" fill="none" stroke="#c8c8c8" stroke-width="1.2"/></svg>
<div class="t" style="left:170px;top:803.5px;font-size:15px;color:#f0f0f0;">伸直</div>
<div class="abs" style="left:-1px;top:846px;width:434px;height:2px;background:#262626"></div>
</div>
<div id="dialog" class="abs" style="left:874px;top:86px;width:571px;height:752px;background:#323232;box-shadow:0 3px 16px 3px rgba(0,0,0,.4)">
<div class="abs" style="left:0;top:0;width:571px;height:30px;background:#fff"></div>
<div class="t" style="left:8px;top:7.5px;font-size:12px;color:#000;">转换为元件</div>
<svg style="left:551px;top:9px" width="11" height="11" viewBox="0 0 11 11"><path d="M0.5 0.5L10.5 10.5M10.5 0.5L0.5 10.5" stroke="#111" stroke-width="1.2"/></svg>
<div class="t" style="right:426px;top:49.5px;font-size:13px;color:#c4c4c4;">名称<span style="font-size:11.5px">(N):</span></div>
<div class="abs" style="left:153px;top:45px;width:273px;height:32px;background:#262626;border:2px solid #2a80e8;border-radius:5px"></div>
<div class="abs" style="left:166px;top:52px;width:40px;height:17px;background:#1164d4"></div>
<div class="t" style="left:167px;top:52.5px;font-size:15px;color:#fff;">元件 1</div>
<div class="abs" style="left:206px;top:52px;width:1px;height:17px;background:#c06a20"></div>
<div class="abs" style="left:468px;top:45px;width:93px;height:32px;background:#e2e2e2;border-radius:16px"></div>
<div class="t" style="left:499px;top:52.5px;font-size:15px;color:#111;">确定</div>
<div class="abs" style="left:468px;top:87px;width:93px;height:32px;border:2px solid #e2e2e2;border-radius:16px"></div>
<div class="t" style="left:500px;top:94.5px;font-size:15px;color:#fff;">取消</div>
<div class="t" style="right:429px;top:91.5px;font-size:13px;color:#c4c4c4;">类型<span style="font-size:11.5px">(T):</span></div>
<div class="abs" style="left:153px;top:87px;width:111px;height:32px;background:#2c2c2c;border:1px solid #4c4c4c;border-radius:5px"></div>
<div class="t" style="left:167px;top:93.5px;font-size:15px;color:#fff;">图形</div>
<svg style="left:242px;top:100px" width="11" height="7" viewBox="0 0 11 7"><path d="M1 1L5.5 5.5L10 1" fill="none" stroke="#e8e8e8" stroke-width="1.8"/></svg>
<div class="t" style="left:275px;top:94.5px;font-size:15px;color:#c8c8c8;">对齐:</div>
<svg style="left:326px;top:92px" width="22" height="22" viewBox="0 0 22 22"><path d="M2.500 2.500H19.500V19.500H2.500Z" fill="none" stroke="#000" stroke-width="1.600"/><path d="M2.500 2.500H19.500V19.500H2.500Z" fill="none" stroke="#fff" stroke-width="1" stroke-dasharray="2 1.500"/><rect x="0.6000000000000001" y="0.6000000000000001" width="3.800" height="3.800" fill="#fff" stroke="#000" stroke-width="1"/><rect x="0.6000000000000001" y="9.1" width="3.800" height="3.800" fill="#fff" stroke="#000" stroke-width="1"/><rect x="0.6000000000000001" y="17.6" width="3.800" height="3.800" fill="#fff" stroke="#000" stroke-width="1"/><rect x="9.1" y="0.6000000000000001" width="3.800" height="3.800" fill="#fff" stroke="#000" stroke-width="1"/><rect x="9" y="9" width="4" height="4" fill="#000"/><rect x="9.1" y="17.6" width="3.800" height="3.800" fill="#fff" stroke="#000" stroke-width="1"/><rect x="17.6" y="0.6000000000000001" width="3.800" height="3.800" fill="#fff" stroke="#000" stroke-width="1"/><rect x="17.6" y="9.1" width="3.800" height="3.800" fill="#fff" stroke="#000" stroke-width="1"/><rect x="17.6" y="17.6" width="3.800" height="3.800" fill="#fff" stroke="#000" stroke-width="1"/></svg>
<div class="t" style="right:426px;top:132.2px;font-size:13px;color:#c4c4c4;letter-spacing:.3px">文件夹:</div>
<div class="t" style="left:154px;top:130.8px;font-size:15.5px;color:#3f90e6;">库根目录</div>
<svg style="left:10px;top:171px" width="10" height="7" viewBox="0 0 10 7"><path d="M1 1L5 5L9 1" fill="none" stroke="#c8c8c8" stroke-width="1.5"/></svg>
<div class="t" style="left:25px;top:165.0px;font-size:15px;color:#e4e4e4;">高级</div>
<div class="abs" style="left:20px;top:215px;width:14px;height:14px;border:1.6px solid #6a6a6a;border-radius:3px"></div>
<div class="t" style="left:46px;top:214.0px;font-size:14px;color:#6c6c6c;letter-spacing:1px;">启用 9 切片缩放比例辅助线(G)</div>
<div class="abs" style="left:20px;top:254px;width:428px;height:172px;border:1px solid #474747;border-radius:4px"></div>
<div class="abs" style="left:26px;top:251px;width:114px;height:7px;background:#323232"></div>
<div class="t" style="left:30px;top:247.2px;font-size:13.5px;color:#cfcfcf;">ActionScript 链接</div>
<div class="abs" style="left:156px;top:279px;width:14px;height:14px;border:1.6px solid #6a6a6a;border-radius:3px"></div>
<div class="t" style="left:181px;top:278.0px;font-size:14px;color:#6c6c6c;">为 ActionScript 导出(X)</div>
<div class="abs" style="left:156px;top:312px;width:14px;height:14px;border:1.6px solid #6a6a6a;border-radius:3px"></div>
<div class="t" style="left:181px;top:311.0px;font-size:14px;color:#6c6c6c;letter-spacing:1.1px;">在第 1 帧中导出</div>
<div class="t" style="right:426px;top:346.8px;font-size:12.5px;color:#6c6c6c;">类<span style="font-size:11px">(C):</span></div>
<div class="abs" style="left:154px;top:343px;width:208px;height:30px;background:#3e3e3e;border-radius:3px"></div>
<div class="t" style="right:426px;top:388.8px;font-size:12.5px;color:#6c6c6c;">基类<span style="font-size:11px">(B):</span></div>
<div class="abs" style="left:154px;top:385px;width:208px;height:30px;background:#3e3e3e;border-radius:3px"></div>
<svg style="left:378px;top:348px" width="14" height="12" viewBox="0 0 14 12"><path d="M1 6.5L5 10.5L13 1" fill="none" stroke="#555" stroke-width="2"/></svg>
<svg style="left:412px;top:347px" width="15" height="15" viewBox="0 0 15 15"><g transform="rotate(45 7.5 7.5)" fill="#555"><rect x="5.3" y="-1" width="4.4" height="2.4"/><rect x="5.3" y="2.2" width="4.4" height="9"/><path d="M5.3 12h4.4L7.5 16Z"/></g></svg>
<svg style="left:378px;top:390px" width="14" height="12" viewBox="0 0 14 12"><path d="M1 6.5L5 10.5L13 1" fill="none" stroke="#555" stroke-width="2"/></svg>
<svg style="left:412px;top:389px" width="15" height="15" viewBox="0 0 15 15"><g transform="rotate(45 7.5 7.5)" fill="#555"><rect x="5.3" y="-1" width="4.4" height="2.4"/><rect x="5.3" y="2.2" width="4.4" height="9"/><path d="M5.3 12h4.4L7.5 16Z"/></g></svg>
<div class="abs" style="left:20px;top:446px;width:428px;height:130px;border:1px solid #474747;border-radius:4px"></div>
<div class="abs" style="left:26px;top:443px;width:103px;height:7px;background:#323232"></div>
<div class="t" style="left:31px;top:437.8px;font-size:14.5px;color:#cfcfcf;letter-spacing:.8px;">运行时共享库</div>
<div class="abs" style="left:156px;top:471px;width:14px;height:14px;border:1.6px solid #6a6a6a;border-radius:3px"></div>
<div class="t" style="left:181px;top:470.0px;font-size:14px;color:#6c6c6c;letter-spacing:1.2px;">为运行时共享导出(O)</div>
<div class="abs" style="left:156px;top:505px;width:14px;height:14px;border:1.6px solid #6a6a6a;border-radius:3px"></div>
<div class="t" style="left:181px;top:504.0px;font-size:14px;color:#6c6c6c;letter-spacing:1.2px;">为运行时共享导入(M)</div>
<div class="t" style="right:426px;top:540.0px;font-size:12px;color:#6c6c6c;">URL(U):</div>
<div class="abs" style="left:154px;top:535px;width:271px;height:30px;background:#3e3e3e;border-radius:3px"></div>
<div class="abs" style="left:20px;top:596px;width:428px;height:126px;border:1px solid #474747;border-radius:4px"></div>
<div class="abs" style="left:26px;top:593px;width:88px;height:7px;background:#323232"></div>
<div class="t" style="left:31px;top:587.8px;font-size:14.5px;color:#cfcfcf;letter-spacing:.8px;">创作时共享</div>
<div class="abs" style="left:30px;top:616px;width:111px;height:32px;background:#3e3e3e;border-radius:3px"></div>
<div class="t" style="left:30px;top:624.0px;width:111px;text-align:center;font-size:14px;color:#6c6c6c">源文件(R)...</div>
<div class="abs" style="left:30px;top:658px;width:111px;height:32px;background:#3e3e3e;border-radius:3px"></div>
<div class="t" style="left:30px;top:666.0px;width:111px;text-align:center;font-size:14px;color:#6c6c6c">元件(S)...</div>
<div class="t" style="left:155px;top:618.0px;font-size:15px;color:#dcdcdc;letter-spacing:.5px;">文件:</div>
<div class="t" style="left:155px;top:655.0px;font-size:15px;color:#dcdcdc;letter-spacing:.5px;">元件名称:</div>
<div class="abs" style="left:153px;top:691px;width:14px;height:14px;border:1.6px solid #6a6a6a;border-radius:3px"></div>
<div class="t" style="left:178px;top:690.0px;font-size:14px;color:#6c6c6c;letter-spacing:.9px;">自动更新(A)</div>
</div>
<!-- red arrows -->
<svg style="left:0;top:0;filter:drop-shadow(1px 2px 1.5px rgba(0,0,0,.6))" width="1920" height="1038" viewBox="0 0 1920 1038">
<path d="M1299.3 200.2L1336 166" stroke="#ff0a0a" stroke-width="2.4" stroke-linecap="round" fill="none"/>
<path d="M1352.8 150.4L1330.2 163L1335.6 165.6L1338.2 171.8Z" fill="#ff0a0a" stroke="#ff0a0a" stroke-width=".8" stroke-linejoin="round"/>
<path d="M1192.4 286L1134 222.6" stroke="#ff0a0a" stroke-width="2.4" stroke-linecap="round" fill="none"/>
<path d="M1118.200 206.800L1139.500 220L1134 222.400L1130 228.800Z" fill="#ff0a0a" stroke="#ff0a0a" stroke-width=".8" stroke-linejoin="round"/>
</svg>
<!-- cursor -->
<svg style="left:1416px;top:151px" width="14.500" height="21.500" viewBox="0 0 14 21"><path d="M1 1V17L4.8 13.4L7.6 19.6L10 18.5L7.3 12.5H12.3Z" fill="#fff" stroke="#000" stroke-width="1" stroke-linejoin="round"/></svg>
<!-- IME bar -->
<div class="abs" style="left:1340px;top:947px;width:218px;height:26px;background:#fff;border-radius:3px;box-shadow:0 0 0 1px rgba(120,170,240,.35)"></div>
<svg style="left:1330px;top:941px" width="36" height="34" viewBox="0 0 36 34"><g transform="rotate(-12 18 17)"><rect x="4" y="4" width="27" height="26" rx="5" fill="#f2571d"/><path d="M26 11.5Q17 6.5 11.5 10.5Q8 14.5 17.5 17Q25.5 19 23 22Q18.5 26 8.5 21.5" fill="none" stroke="#fff" stroke-width="4.2" stroke-linecap="round"/></g></svg>
<div class="t" style="left:1370px;top:953px;font-size:15px;font-weight:bold;color:#0b6bd8">中</div>
<svg style="left:1395px;top:954px" width="14" height="12" viewBox="0 0 14 12"><circle cx="3" cy="3" r="1.8" fill="none" stroke="#0b6bd8" stroke-width="1.3"/><path d="M10 7.2q1.8 0 1.6 2q-.3 1.8-2.2 2.6l-.4-.8q1.2-.6 1.2-1.6q-1.4 0-1.4-1.1q0-1.1 1.2-1.1Z" fill="#0b6bd8"/></svg>
<svg style="left:1418px;top:952px" width="14" height="17" viewBox="0 0 14 17"><rect x="4.3" y="0" width="5.4" height="10" rx="2.7" fill="#0b6bd8"/><path d="M1.5 7Q1.5 12.5 7 12.5Q12.500 12.5 12.5 7" fill="none" stroke="#0b6bd8" stroke-width="1.5"/><path d="M7 12.5V15.5M4.5 16H9.5" stroke="#0b6bd8" stroke-width="1.5"/></svg>
<svg style="left:1442px;top:954px" width="16" height="12" viewBox="0 0 16 12"><rect x="0.8" y="0.8" width="14.4" height="10.4" rx="1.5" fill="#fff" stroke="#0b6bd8" stroke-width="1.6"/><g fill="#0b6bd8"><rect x="3" y="3" width="2" height="1.8"/><rect x="6" y="3" width="2" height="1.8"/><rect x="9" y="3" width="2" height="1.8"/><rect x="12" y="3" width="1.6" height="1.8"/><rect x="3" y="5.6" width="2" height="1.8"/><rect x="6" y="5.6" width="2" height="1.8"/><rect x="9" y="5.6" width="2" height="1.8"/><rect x="12" y="5.6" width="1.6" height="1.8"/><rect x="3" y="8.2" width="10" height="1.6"/></g></svg>
<svg style="left:1466px;top:953px" width="16" height="14" viewBox="0 0 16 14"><path d="M4.5 0.5Q8 3 11.500 0.5L16 3.500L14 7L12.500 6.2V13.5H3.500V6.2L2 7L0 3.500Z" fill="#0b6bd8"/></svg>
<svg style="left:1489px;top:953px" width="17" height="14" viewBox="0 0 17 14"><rect x="0.5" y="3.5" width="16" height="10" rx="5" fill="#0b6bd8"/><rect x="7.800" y="0" width="1.4" height="4" fill="#0b6bd8"/><path d="M3.500 8.500H7.500M5.500 6.500V10.500" stroke="#fff" stroke-width="1.2"/><circle cx="11.800" cy="8.500" r="1.500" fill="none" stroke="#fff" stroke-width="1.1"/></svg>
<svg style="left:1515px;top:953px" width="14" height="14" viewBox="0 0 14 14"><rect x="0" y="0" width="6" height="6" rx="1.300" fill="#0b6bd8"/><rect x="0" y="7.600" width="6" height="6" rx="1.300" fill="#0b6bd8"/><rect x="7.600" y="7.600" width="6" height="6" rx="1.300" fill="#0b6bd8"/><rect x="8.300" y="0.700" width="4.600" height="4.600" rx="1.200" fill="none" stroke="#0b6bd8" stroke-width="1.500"/></svg>
<svg style="left:1538px;top:952px" width="16" height="17" viewBox="0 0 16 17"><path d="M8 0.500L10.500 3.500H14.500L13.300 7.500L15.500 10.500L12 12L8 16.500L4 12L0.500 10.500L2.700 7.500L1.500 3.500H5.500Z" fill="#0b6bd8"/><circle cx="8" cy="7" r="2.200" fill="#fff"/><path d="M8 8V15" stroke="#fff" stroke-width="1.200"/></svg>
<!-- watermark -->
<svg style="left:1758px;top:985px" width="50" height="46" viewBox="0 0 50 46"><defs><linearGradient id="wg1" x1="0" y1="1" x2="1" y2="0"><stop offset="0" stop-color="#1455b0"/><stop offset="1" stop-color="#1f9ad0"/></linearGradient><linearGradient id="wg2" x1="0" y1="1" x2="1" y2="0"><stop offset="0" stop-color="#c9c417"/><stop offset=".5" stop-color="#2f9a38"/><stop offset="1" stop-color="#128a40"/></linearGradient></defs><path d="M47 2Q20 4 8 18Q-2 30 8 36Q18 41 26 33Q30 27 23 27Q17 28 14 31Q18 23 27 25Q34 28 29 35Q20 44 8 40Q-4 34 4 20Q16 2 47 2Z" fill="url(#wg1)"/><path d="M20 21Q36 12 42 20Q46 30 30 40Q18 46 4 43Q22 42 32 33Q40 24 33 20Q27 18 20 21Z" fill="url(#wg2)"/></svg>
<div class="t" style="left:1803px;top:989px;font-size:21px;font-weight:bold;color:#1e5ea6">极光下载站</div>
<div class="t" style="left:1805px;top:1013px;font-size:16.500px;color:#118a3c">www.xz7.com</div>

</body>
</html>
